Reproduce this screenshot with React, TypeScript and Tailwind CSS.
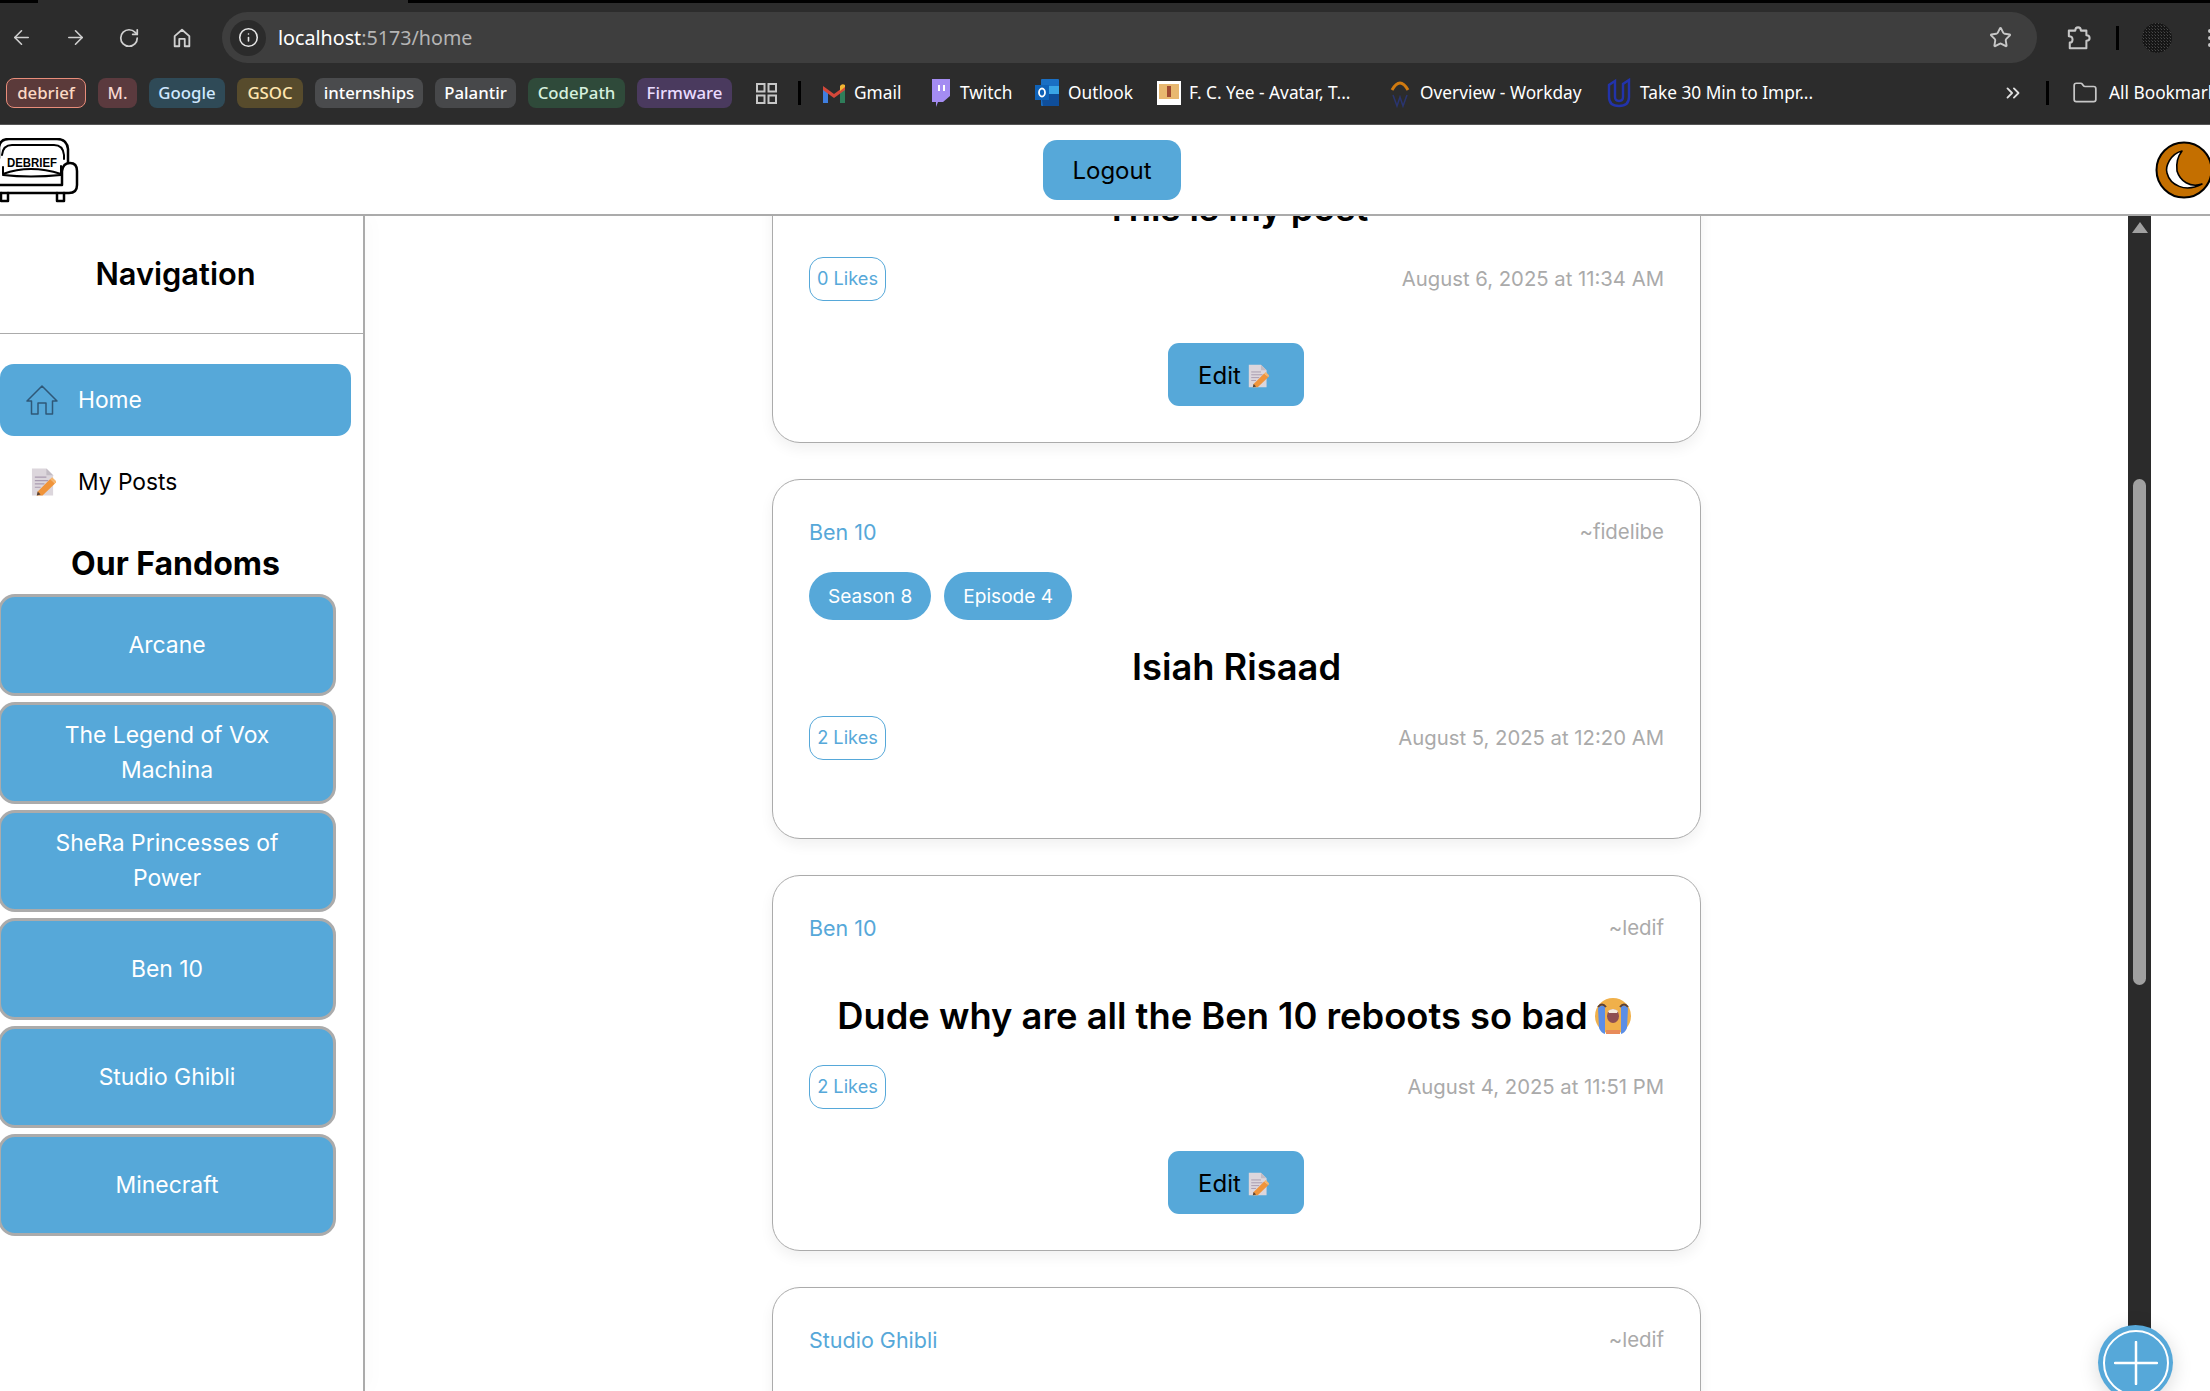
import React from "react";
import { ArrowLeft, ArrowRight, RotateCw, Info, Star, ChevronsRight, Folder } from "lucide-react";

function DocPencil({ className }: { className: string }) {
  return (
    <svg viewBox="0 0 26 28" className={className}>
      <path d="M1 0H16L23 7V28H1Z" fill="#dcd6dc" />
      <path d="M16 0L23 7H16Z" fill="#c2bcc4" />
      <path d="M4 9H16M4 12.5H18M4 16H14M4 19.5H10" stroke="#a99bb0" strokeWidth="1.2" />
      <path d="M7 24L20 11L25 15.5L12 28L6 28Z" fill="#f0943a" />
      <path d="M20 11L22 9L26.5 13.5L25 15.5Z" fill="#f7b56b" />
      <path d="M6 28L7 24L10 27Z" fill="#55433a" />
    </svg>
  );
}

function CryFace() {
  return (
    <svg viewBox="0 0 36 36" className="w-[36px] h-[36px] ml-[7px] mr-[5px] shrink-0">
      <circle cx="18" cy="18" r="18" fill="#f0b04a" />
      <path d="M3 8Q7 4 10 7V34Q6 33 4 28Z" fill="#5b8ee6" transform="translate(0 2)" />
      <path d="M33 8Q29 4 26 7V34Q30 33 32 28Z" fill="#5b8ee6" transform="translate(0 2)" />
      <path d="M3 9Q7 4 11 9M25 9Q29 4 33 9" stroke="#5a4038" strokeWidth="2" fill="none" />
      <ellipse cx="18" cy="18" rx="6" ry="7" fill="#8e4f52" />
      <path d="M13 13Q18 9 23 13L22 15H14Z" fill="#f4ece0" />
      <path d="M11 32H25V36H11Z" fill="#e88b5a" />
    </svg>
  );
}

function Chip({ label, w, bg, fg, extra = "" }: { label: string; w: string; bg: string; fg: string; extra?: string }) {
  return (
    <div className={`${w} ${bg} ${fg} ${extra} h-[30px] rounded-[8px] flex items-center justify-center text-[16.800px] font-medium shrink-0`}>
      {label}
    </div>
  );
}

function Mark({ icon, label, w, iconW }: { icon: React.ReactNode; label: string; w: string; iconW: string }) {
  return (
    <div className={`${w} flex items-center shrink-0`}>
      <div className={`${iconW} h-[30px] flex items-center justify-center shrink-0`}>{icon}</div>
      <span className="text-[17.300px] text-white whitespace-nowrap">{label}</span>
    </div>
  );
}

function BrowserChrome() {
  return (
    <div className="h-[125px] bg-[#2c2c2c] border-b border-[#555] flex flex-col font-['Noto_Sans',sans-serif] shrink-0">
      <div className="h-[3px] bg-black flex shrink-0">
        <div className="ml-[38px] w-[370px] bg-[#2c2c2c]" />
      </div>
      <div className="h-[60px] flex items-start pt-[9px] shrink-0">
        <div className="w-[222px] h-[51px] flex items-center pl-[10px] gap-[31px] text-[#d0d0d0] shrink-0">
          <ArrowLeft size={23} strokeWidth={1.7} />
          <ArrowRight size={23} strokeWidth={1.7} />
          <RotateCw size={22} strokeWidth={1.9} />
          <svg viewBox="0 0 24 24" className="w-[22px] h-[24px]" fill="none" stroke="#d0d0d0" strokeWidth="2">
            <path d="M12 3L4 10V21H9V13H15V21H20V10Z" strokeLinejoin="round" />
          </svg>
        </div>
        <div className="w-[1815px] h-[51px] bg-[#3e3e3e] rounded-full flex items-center pl-[8px] pr-[25px] shrink-0">
          <div className="w-[36px] h-[36px] rounded-full bg-[#2b2b2b] flex items-center justify-center shrink-0">
            <Info size={21} strokeWidth={1.8} className="text-[#e6e6e6]" />
          </div>
          <div className="ml-[12px] text-[19.700px] leading-none whitespace-nowrap flex-1">
            <span className="text-white">localhost</span>
            <span className="text-[#b5b5b5]">:5173/home</span>
          </div>
          <Star size={23} strokeWidth={2} className="text-[#c7c7c7]" />
        </div>
        <div className="flex items-center h-[51px] shrink-0">
          <svg viewBox="0 0 26 26" className="ml-[30px] w-[24px] h-[26px]" fill="none" stroke="#c7c7c7" strokeWidth="2.2" strokeLinejoin="round">
            <path d="M2 5H9Q9 1.5 12 1.5T15 5H21V10Q24.500 10 24.500 13T21 16V24H3V18Q6 18 6 14.500T2 11Z" />
          </svg>
          <div className="ml-[25px] w-[3px] h-[24px] bg-black" />
          <svg viewBox="0 0 30 30" className="ml-[23px] w-[30px] h-[30px]">
            <defs>
              <pattern id="speck" width="3" height="3" patternUnits="userSpaceOnUse">
                <rect width="3" height="3" fill="#161616" />
                <rect x="1" y="0" width="1" height="1" fill="#4a4a4a" />
                <rect x="0" y="2" width="1" height="1" fill="#333" />
              </pattern>
            </defs>
            <circle cx="15" cy="15" r="15" fill="url(#speck)" />
          </svg>
          <div className="ml-[36px] flex flex-col gap-[3px]">
            <div className="w-[4px] h-[4px] bg-[#c7c7c7] rounded-full" />
            <div className="w-[4px] h-[4px] bg-[#c7c7c7] rounded-full" />
            <div className="w-[4px] h-[4px] bg-[#c7c7c7] rounded-full" />
          </div>
        </div>
      </div>
      <div className="h-[30px] mt-[15px] flex items-center pl-[6px] shrink-0 overflow-hidden">
        <div className="flex items-center gap-[12px] shrink-0">
          <Chip label="debrief" w="w-[80px]" bg="bg-[#5b3a3a]" fg="text-[#fbd9c4]" extra="border border-[#e88d7a]" />
          <Chip label="M." w="w-[39px]" bg="bg-[#5b3a3e]" fg="text-[#f6d7d0]" />
          <Chip label="Google" w="w-[76px]" bg="bg-[#2f4a57]" fg="text-[#cfe8ff]" />
          <Chip label="GSOC" w="w-[66px]" bg="bg-[#574b2c]" fg="text-[#ffe6b0]" />
          <Chip label="internships" w="w-[108px]" bg="bg-[#4a4b4d]" fg="text-white" />
          <Chip label="Palantir" w="w-[81px]" bg="bg-[#47484a]" fg="text-white" />
          <Chip label="CodePath" w="w-[97px]" bg="bg-[#2f4a3a]" fg="text-[#d6f0de]" />
          <Chip label="Firmware" w="w-[95px]" bg="bg-[#4a3a5e]" fg="text-[#eadcff]" />
        </div>
        <svg viewBox="0 0 21 21" className="ml-[24px] w-[21px] h-[21px] shrink-0" fill="none" stroke="#c7c7c7" strokeWidth="2">
          <rect x="1" y="1" width="7.500" height="7.500" />
          <rect x="12.500" y="1" width="7.500" height="7.500" />
          <rect x="1" y="12.500" width="7.500" height="7.500" />
          <rect x="12.500" y="12.500" width="7.500" height="7.500" />
        </svg>
        <div className="ml-[21px] w-[3px] h-[24px] bg-black shrink-0" />
        <div className="ml-[21px] flex-1 min-w-0 flex items-center">
          <Mark
            w="w-[106px]"
            iconW="w-[32px] pr-[8px]"
            label="Gmail"
            icon={
              <svg viewBox="0 0 24 20" className="w-[24px] h-[20px]">
                <path d="M1 4V20H6V8Z" fill="#3f7fe0" />
                <path d="M18 8V20H23V4Z" fill="#2f7d5a" />
                <path d="M1 3L12 11L23 3V7L12 15L1 7Z" fill="#d4483a" />
                <path d="M18 8L23 4V2Q20 0 18 3Z" fill="#f2b632" />
              </svg>
            }
          />
          <Mark
            w="w-[106px]"
            iconW="w-[32px] pr-[8px]"
            label="Twitch"
            icon={
              <svg viewBox="0 0 22 30" className="w-[22px] h-[30px]">
                <path d="M3 1H21V18L14 24H9L7 29V24H3Z" fill="#a48cf2" />
                <path d="M10 7V13M15 7V13" stroke="#fff" strokeWidth="2" />
              </svg>
            }
          />
          <Mark
            w="w-[123px]"
            iconW="w-[34px] pr-[8px]"
            label="Outlook"
            icon={
              <svg viewBox="0 0 24 30" className="w-[24px] h-[30px]">
                <rect x="6" y="1" width="18" height="27" rx="1" fill="#1a6fc4" />
                <rect x="14" y="8" width="10" height="10" fill="#39a5e6" />
                <path d="M6 16L24 16V28H8Z" fill="#0f4e9a" />
                <rect x="0" y="7" width="14" height="15" fill="#0f62b8" />
                <ellipse cx="7" cy="14.500" rx="3" ry="4" fill="none" stroke="#fff" strokeWidth="1.800" />
              </svg>
            }
          />
          <Mark
            w="w-[233px]"
            iconW="w-[32px] pr-[8px]"
            label="F. C. Yee - Avatar, T..."
            icon={
              <svg viewBox="0 0 24 24" className="w-[24px] h-[24px]">
                <rect width="24" height="24" fill="#fff" />
                <rect x="2" y="3" width="20" height="15" fill="#e8b870" />
                <rect x="10" y="5" width="4" height="11" fill="#a04a32" />
              </svg>
            }
          />
          <Mark
            w="w-[217px]"
            iconW="w-[30px] pr-[10px]"
            label="Overview - Workday"
            icon={
              <svg viewBox="0 0 20 30" className="w-[20px] h-[30px]" fill="none">
                <path d="M2 12Q10 -2 18 12" stroke="#d07a10" strokeWidth="3" />
                <path d="M3 17L7 28L10 19L13 28L17 17" stroke="#2a3570" strokeWidth="1.500" />
              </svg>
            }
          />
          <Mark
            w="w-[220px]"
            iconW="w-[33px] pr-[9px]"
            label="Take 30 Min to Impr..."
            icon={
              <svg viewBox="0 0 24 30" className="w-[24px] h-[30px]" fill="none" stroke="#2233aa" strokeWidth="2.400">
                <path d="M2 7V19Q2 28 12 28T22 19V2L16 6V19Q16 23 12 23T8 19V3Z" />
              </svg>
            }
          />
        </div>
        <div className="w-[208px] flex items-center shrink-0">
          <ChevronsRight size={22} strokeWidth={2} className="text-[#e0e0e0] shrink-0" />
          <div className="ml-[22px] w-[3px] h-[24px] bg-black shrink-0" />
          <Folder size={26} strokeWidth={1.6} className="text-[#c7c7c7] ml-[23px] shrink-0" />
          <span className="ml-[11px] text-[17.300px] text-white whitespace-nowrap">All Bookmarks</span>
        </div>
      </div>
    </div>
  );
}

function Logo() {
  return (
    <svg viewBox="0 0 80 66" className="w-[80px] h-[66px] shrink-0" fill="none" stroke="#000" strokeWidth="2.500" strokeLinecap="round" strokeLinejoin="round">
      <path d="M-1 20V9Q0 1 9 1H57Q67 1 68 11V24" />
      <path d="M2 17Q3 7 12 7H54Q63 7 64 17V21" strokeWidth="2" />
      <path d="M3 29V36Q30 26 61 36V28" strokeWidth="2" />
      <path d="M3 37Q30 40 61 37" strokeWidth="2" />
      <path d="M-1 47H62V33Q63 25 70 25Q77 25 77 33V47Q77 55 69 55H-1" fill="#fff" />
      <path d="M1 55V63H8V55M57 55V63H64V55" />
      <text x="32" y="29" textAnchor="middle" fill="#000" stroke="none" className="font-['Liberation_Sans',sans-serif]" fontSize="12.500" fontWeight="700" textLength="50" lengthAdjust="spacingAndGlyphs">
        DEBRIEF
      </text>
    </svg>
  );
}

function Moon() {
  return (
    <svg viewBox="0 0 58 58" className="w-[58px] h-[58px] shrink-0">
      <circle cx="29" cy="29" r="27.500" fill="#c46f00" stroke="#000" strokeWidth="2" />
      <path d="M27 10C15 13 10 26 12 32C15 44 30 52 47 43C35 47 25 40 22 30C21 22 23 15 27 10Z" fill="#fff" stroke="#000" strokeWidth="1.600" strokeLinejoin="round" />
    </svg>
  );
}

function AppHeader() {
  return (
    <header className="h-[91px] bg-white border-b-2 border-[#ababab] flex items-center justify-between shrink-0 overflow-hidden">
      <div className="w-[80px] mt-[3px]"><Logo /></div>
      <button className="w-[138px] h-[60px] pt-[2px] rounded-[14px] bg-[#56a8d9] text-black text-[24px] ml-[963px] mr-auto">Logout</button>
      <div className="w-[55px] flex justify-start"><Moon /></div>
    </header>
  );
}

const fandoms = ["Arcane", "The Legend of Vox Machina", "SheRa Princesses of Power", "Ben 10", "Studio Ghibli", "Minecraft"];

function Sidebar() {
  return (
    <aside className="w-[365px] h-full bg-white border-r-2 border-[#ababab] shrink-0 shadow-[8px_0_16px_rgba(0,0,0,0.015)] z-10 overflow-hidden">
      <div className="h-[118px] border-b border-[#ababab] flex items-center">
        <div className="w-[351px] text-center text-[30.800px] font-semibold text-black">Navigation</div>
      </div>
      <div className="w-[351px] h-[72px] mt-[30px] rounded-[14px] bg-[#56a8d9] flex items-center pl-[26px] text-white text-[22.800px]">
        <svg viewBox="0 0 32 30" className="w-[32px] h-[30px] shrink-0" fill="none" stroke="#2f5878" strokeWidth="1.500" strokeLinejoin="round">
          <path d="M16 1L1 16H5.500V29H12V18H20V29H26.500V16H31Z" />
        </svg>
        <span className="ml-[20px]">Home</span>
      </div>
      <div className="w-[351px] h-[72px] mt-[10px] flex items-center pl-[31px] text-black text-[22.800px]">
        <DocPencil className="w-[25px] h-[28px] shrink-0" />
        <span className="ml-[22px]">My Posts</span>
      </div>
      <div className="w-[351px] h-[48px] mt-[22px] flex items-center justify-center text-[32px] font-bold text-black">Our Fandoms</div>
      <div className="flex flex-col gap-[6px] -ml-[2px] w-[338px] mt-[6px]">
        {fandoms.map((f) => (
          <div key={f} className="h-[102px] border-[3px] border-[#ababab] rounded-[17px] bg-[#56a8d9] text-white text-[22.900px] leading-[35px] text-center flex items-center justify-center px-[40px]">
            {f}
          </div>
        ))}
      </div>
    </aside>
  );
}

function EditButton() {
  return (
    <button className="w-[136px] h-[63px] -ml-[1px] pt-[2px] pr-[5px] rounded-[11px] bg-[#56a8d9] text-black text-[24px] flex items-center justify-center gap-[7px]">
      <span>Edit</span>
      <DocPencil className="w-[21px] h-[24px]" />
    </button>
  );
}

type Post = {
  fandom: string;
  user: string;
  tags: string[];
  title: string;
  cry?: boolean;
  likes: number;
  date: string;
  edit: boolean;
  mt?: string;
};

const posts: Post[] = [
  { fandom: "Arcane", user: "~ledif", tags: [], title: "This is my post", likes: 0, date: "August 6, 2025 at 11:34 AM", edit: true, mt: "-mt-[149px]" },
  { fandom: "Ben 10", user: "~fidelibe", tags: ["Season 8", "Episode 4"], title: "Isiah Risaad", likes: 2, date: "August 5, 2025 at 12:20 AM", edit: false },
  { fandom: "Ben 10", user: "~ledif", tags: [], title: "Dude why are all the Ben 10 reboots so bad", cry: true, likes: 2, date: "August 4, 2025 at 11:51 PM", edit: true },
  { fandom: "Studio Ghibli", user: "~ledif", tags: [], title: "Studio Ghibli", likes: 0, date: "August 4, 2025 at 10:02 PM", edit: false },
];

function PostCard({ post }: { post: Post }) {
  return (
    <article className={`${post.mt ?? ""} w-[929px] rounded-[28px] border border-[#ababab] bg-white shadow-[0_6px_14px_rgba(0,0,0,0.06)] pt-[35px] px-[36px] pb-[36px] shrink-0`}>
      <div className="h-[34px] flex items-center justify-between">
        <span className="text-[#56a8d9] text-[21.500px]">{post.fandom}</span>
        <span className="text-[#aaaaaa] text-[20.400px]">{post.user}</span>
      </div>
      <div className={`mt-[23px] flex gap-[13px] ${post.tags.length ? "mb-[20px]" : "mb-[21px]"}`}>
        {post.tags.map((t) => (
          <span key={t} className="h-[48px] px-[19px] rounded-full bg-[#56a8d9] text-white text-[19.100px] flex items-center">{t}</span>
        ))}
      </div>
      <h2 className="h-[54px] flex items-center justify-center text-[36.300px] font-semibold text-black whitespace-nowrap">
        {post.title}
        {post.cry && <CryFace />}
      </h2>
      <div className="mt-[22px] h-[44px] flex items-center justify-between">
        <span className="w-[77px] h-[44px] rounded-[14px] border border-[#56a8d9] text-[#56a8d9] text-[18.200px] flex items-center justify-center">{post.likes} Likes</span>
        <span className="text-[#aaaaaa] text-[20.300px]">{post.date}</span>
      </div>
      <div className="mt-[42px] flex justify-center">{post.edit && <EditButton />}</div>
    </article>
  );
}

function Scrollbar() {
  return (
    <div className="w-[23px] h-full bg-[#2b2b2b] shrink-0 flex flex-col items-center">
      <div className="mt-[6px] w-0 h-0 border-x-[8px] border-x-transparent border-b-[11px] border-b-[#a0a0a0]" />
      <div className="mt-[246px] w-[13px] h-[506px] rounded-full bg-[#a0a0a0]" />
    </div>
  );
}

export default function App() {
  return (
    <div className="w-[2210px] h-[1391px] overflow-hidden bg-white flex flex-col font-['Inter',sans-serif] relative">
      <BrowserChrome />
      <AppHeader />
      <div className="flex-1 min-h-0 flex">
        <Sidebar />
        <main className="flex-1 min-w-0 h-full overflow-hidden flex">
          <div className="flex-1 min-w-0 h-full overflow-hidden">
            <div className="flex flex-col gap-[36px] ml-[407px]">
              {posts.map((p) => (
                <PostCard key={p.title} post={p} />
              ))}
            </div>
          </div>
          <Scrollbar />
          <div className="w-[59px] shrink-0" />
        </main>
      </div>
      <button className="absolute left-[2098px] top-[1325px] w-[75px] h-[75px] rounded-full bg-[#56a8d9] shadow-[0_4px_20px_rgba(0,0,0,0.15)] flex items-center justify-center">
        <span className="w-[66px] h-[66px] rounded-full border-[2.500px] border-white flex items-center justify-center">
          <svg viewBox="0 0 44 44" className="w-[44px] h-[44px]" stroke="#fff" strokeWidth="2.500" strokeLinecap="round">
            <path d="M22 1V43M1 22H43" />
          </svg>
        </span>
      </button>
    </div>
  );
}
